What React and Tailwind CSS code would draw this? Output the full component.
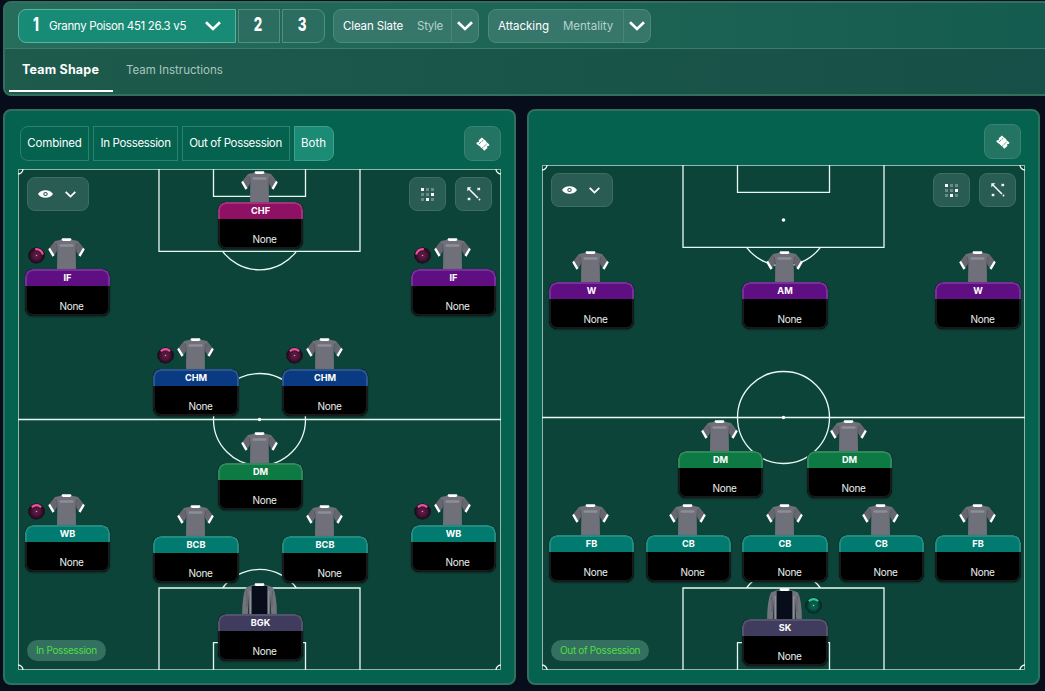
import clsx from "clsx";

const ROLE_COLORS = {
  CHF: "bg-[#8f1163] border-[#a03379]",
  IF: "bg-[#5f0f82] border-[#77309a]",
  W: "bg-[#5f0f82] border-[#77309a]",
  AM: "bg-[#5f0f82] border-[#77309a]",
  CHM: "bg-[#093a82] border-[#2d568f]",
  DM: "bg-[#0e7a43] border-[#30885c]",
  WB: "bg-[#017a6f] border-[#258a80]",
  BCB: "bg-[#017a6f] border-[#258a80]",
  CB: "bg-[#017a6f] border-[#258a80]",
  FB: "bg-[#017a6f] border-[#258a80]",
  BGK: "bg-[#403c5d] border-[#56536f]",
  SK: "bg-[#403c5d] border-[#56536f]",
};

// x / y are the top-left corner of the role card on the pitch
const IN_POSSESSION = [
  { role: "CHF", x: 200, y: 33 },
  { role: "IF", x: 7, y: 100, ball: 35 },
  { role: "IF", x: 393, y: 100, ball: -35 },
  { role: "CHM", x: 135, y: 200, ball: 0, wide: true },
  { role: "CHM", x: 264, y: 200, ball: 0, wide: true },
  { role: "DM", x: 200, y: 294 },
  { role: "WB", x: 7, y: 356, ball: 0 },
  { role: "WB", x: 393, y: 356, ball: 0 },
  { role: "BCB", x: 135, y: 367, wide: true },
  { role: "BCB", x: 264, y: 367, wide: true },
  { role: "BGK", x: 200, y: 445, keeper: true },
];

const OUT_OF_POSSESSION = [
  { role: "W", x: 7, y: 117 },
  { role: "AM", x: 200, y: 117, wide: true },
  { role: "W", x: 393, y: 117, wide: true },
  { role: "DM", x: 136, y: 286 },
  { role: "DM", x: 265, y: 286 },
  { role: "FB", x: 7, y: 370 },
  { role: "CB", x: 104, y: 370 },
  { role: "CB", x: 200, y: 370, wide: true },
  { role: "CB", x: 297, y: 370 },
  { role: "FB", x: 393, y: 370, wide: true },
  { role: "SK", x: 200, y: 454, keeper: true, greenBall: true, wide: true },
];

function Chevron({ className }) {
  return (
    <svg viewBox="0 0 16 10" fill="none" stroke="currentColor" strokeWidth="2.6" className={className}>
      <path d="M1 1.2 8 8 15 1.2" />
    </svg>
  );
}

function EyeIcon() {
  return (
    <svg width="15" height="8" viewBox="0 0 14 8" preserveAspectRatio="none">
      <path
        fillRule="evenodd"
        fill="#fff"
        d="M7 .3C10.2.3 12.8 1.7 14 4 12.8 6.3 10.2 7.7 7 7.7S1.200 6.300 0 4C1.200 1.700 3.800.3 7 .3ZM7 1.900A2.100 2.100 0 1 0 7 6.100 2.100 2.100 0 1 0 7 1.900Z"
      />
      <circle cx="7" cy="4" r="1.1" fill="#fff" />
    </svg>
  );
}

function GridIcon() {
  const bright = [0, 5, 7];
  return (
    <svg width="13" height="13" viewBox="0 0 13 13">
      {Array.from({ length: 9 }).map((_, i) => (
        <rect
          key={i}
          x={(i % 3) * 5}
          y={Math.floor(i / 3) * 5}
          width="3"
          height="3"
          fill="#fff"
          opacity={bright.includes(i) ? 1 : 0.3}
        />
      ))}
    </svg>
  );
}

function ArrowIcon() {
  return (
    <svg width="14" height="14" viewBox="0 0 14 14" stroke="#fff" fill="none">
      <path d="M2 2 11 11" strokeWidth="1.5" />
      <path d="M.3.3h4L.3 4.3Z" fill="#fff" stroke="none" />
      <path d="M10.5.8l2.500 2.400M13 .8l-2.500 2.400M.8 10.800l2.500 2.400M3.300 10.800.8 13.200" strokeWidth="1.1" />
      <circle cx="12.5" cy="12.5" r=".9" fill="#fff" stroke="none" />
    </svg>
  );
}

function TicketIcon() {
  return (
    <svg width="14" height="14" viewBox="0 0 14 14">
      <path
        fill="#fff"
        d="M5.9.4 7.3 1.8 8.2 2.6 9.2 3.2 10.1 4.2 10.8 5.4 12 6.3 13.6 8 12.6 9.1 11.4 8.9 11 10 11.6 10.8 8.4 13.7 7.4 12.7 6.1 11.4 5 10.8 4.4 9.7 3.4 8.9.6 7 .4 6 1.6 4.9 2.6 5.2 3.1 4.3 2.5 3.4Z"
      />
      <path d="M3.2 6.8 8.6 1.9M5.8 11.6 11 6.6" stroke="#237463" strokeWidth=".8" strokeDasharray="2.4 .8" />
    </svg>
  );
}

function Shirt() {
  return (
    <svg width="37" height="32" viewBox="0 0 37 32">
      <path d="M14 1.5 7 3 1.5 10 6 17.5 9.3 12 9 32H28L27.7 12 31 17.5 35.5 10 30 3 23 1.5Z" fill="#6f7079" />
      <path d="M7 3.5 9.3 12 6 17.5 1.8 10.3ZM30 3.5 27.7 12 31 17.5 35.2 10.3Z" fill="#65666f" />
      <path d="M8.3 5.5 9.4 13M28.7 5.5 27.6 13" stroke="#53545d" strokeWidth=".8" />
      <path d="M.2 11.2 2 9.8 6.5 17.2 4.5 18.7ZM36.8 11.2 35 9.8 30.5 17.2 32.5 18.7Z" fill="#fff" />
      <path d="M14.2.3h8.6l.8 1.6-1.8 1.2h-6.6l-1.8-1.2Z" fill="#fff" />
      <rect x="11.5" y="6.2" width="14" height="2.6" rx="1" fill="#8d8e96" />
    </svg>
  );
}

function KeeperShirt() {
  return (
    <svg width="37" height="32" viewBox="0 0 37 32">
      <path d="M11 2.2 5 4.5Q1.2 12 1.1 32H35.9Q35.8 12 32 4.5L26 2.2Z" fill="#72737c" />
      <path d="M6.8 32Q7.5 18 8.2 10L8.2 32ZM30.2 32Q29.5 18 28.8 10L28.8 32Z" fill="#163c38" />
      <path d="M5.5 8Q6.5 14 6 24M31.5 8Q30.5 14 31 24" stroke="#5b5c65" strokeWidth=".9" fill="none" />
      <path d="M9.2 8v24M27.8 8v24" stroke="#c5c8cc" strokeWidth=".7" opacity=".7" />
      <path d="M10.7 3H26.3V32H10.7Z" fill="#080d1b" />
      <path d="M14.2.3h8.6l.8 1.6-1.6 1h-7l-1.6-1Z" fill="#fff" />
    </svg>
  );
}

/* Duty dial beside the shirt, the lit arc is turned by `angle` */
function Ball({ angle = 0, green }) {
  const lit = green ? "#2fc795" : "#e9559c";
  return (
    <svg width="17" height="17" viewBox="0 0 17 17">
      <defs>
        <radialGradient id="ballPink">
          <stop offset="0" stopColor="#7a2356" />
          <stop offset=".5" stopColor="#4c1538" />
          <stop offset="1" stopColor="#160816" />
        </radialGradient>
        <radialGradient id="ballGreen">
          <stop offset="0" stopColor="#107d68" />
          <stop offset=".5" stopColor="#075546" />
          <stop offset="1" stopColor="#03211e" />
        </radialGradient>
      </defs>
      <path
        d="M8.5.2 11 1.1 13.6 1.9 15.2 4.1 16.7 6.2V8.7L16.5 11.2 14.8 13.3 13 15.3 10.6 16 8.5 16.8 6 16.1 3.6 15.2 2.1 13.1.5 11.2.4 8.7.3 6.2 1.8 4 3.4 1.9 6 1.1Z"
        fill={green ? "url(#ballGreen)" : "url(#ballPink)"}
      />
      <path d="M8.5 4.5v8M4.5 8.5h8M5.5 5.5l6 6M11.5 5.5l-6 6" stroke={green ? "#054239" : "#3a112e"} strokeWidth=".5" />
      <circle cx="8.5" cy="8.5" r=".8" fill={green ? "#8ae8cb" : "#f08abb"} />
      <path d="M3.8 4.1Q8.5.2 13.2 4.1" transform={`rotate(${angle} 8.5 8.5)`} stroke={lit} strokeWidth="2.1" fill="none" />
    </svg>
  );
}

function Player({ role, x, y, ball, keeper, greenBall, wide }) {
  return (
    <div className={clsx("absolute", wide ? "w-[86px]" : "w-[85px]")} style={{ left: x, top: y }}>
      <div className={clsx("absolute -top-[31px]", wide ? "left-[23.5px]" : "left-[23px]")}>
        {keeper ? <KeeperShirt /> : <Shirt />}
      </div>
      {ball !== undefined && (
        <div className={clsx("absolute -top-[22px]", wide ? "left-[3.5px]" : "left-[3px]")}>
          <Ball angle={ball} />
        </div>
      )}
      {greenBall && (
        <div className="absolute left-[63px] -top-[22px]">
          <Ball green />
        </div>
      )}
      <div className="relative h-[47px] overflow-hidden rounded-lg bg-black shadow-[0_1px_2px_rgba(0,0,0,0.4)]">
        <div
          className={clsx(
            "flex h-[17px] items-center justify-center rounded-t-lg border-2 border-b-0 pb-[2px] text-[9.2px] font-bold leading-none text-white",
            ROLE_COLORS[role]
          )}
        >
          {role}
        </div>
        <div
          className={clsx(
            "flex h-[30px] items-center justify-center rounded-b-lg border-2 border-t-0 border-[#171a1b] pt-[11px] text-[10px] leading-none tracking-[-0.3px] text-[#eceeee]",
            wide ? "pl-[9px]" : "pl-2"
          )}
        >
          None
        </div>
      </div>
    </div>
  );
}

function PitchLines({ height }) {
  const h = height;
  return (
    <svg width="483" height={h} viewBox={`0 0 483 ${h}`} fill="none" stroke="#e8fbf3" strokeWidth="1.3" className="absolute inset-0">
      <rect x=".5" y=".5" width="482" height={h - 1} stroke="#93b8ab" strokeWidth="1" />
      <path d={`M0 ${h / 2}H483`} />
      <circle cx="241.5" cy={h / 2} r="46" />
      <circle cx="241.5" cy={h / 2} r="1.7" fill="#fff" stroke="none" />
      <circle cx="241.5" cy="55" r="1.8" fill="#fff" stroke="none" />
      <path d="M141 0V82.3H342V0M195.5 0V27.3H287.5V0M204.6 82.3A46 46 0 0 0 278.4 82.3" />
      <path d={`M141 ${h}V${h - 82}H342V${h}M195.5 ${h}V${h - 27.3}H287.5V${h}M204.6 ${h - 82}A46 46 0 0 1 278.4 ${h - 82}`} />
      <path d={`M5 0A5 5 0 0 1 0 5M478 0A5 5 0 0 0 483 5M0 ${h - 5}A5 5 0 0 1 5 ${h}M483 ${h - 5}A5 5 0 0 0 478 ${h}`} />
    </svg>
  );
}

function Pitch({ label, players, height, className }) {
  return (
    <div className={clsx("relative w-[483px] bg-[#0d443a]", className)}>
      <PitchLines height={height} />
      {players.map((p, i) => (
        <Player key={i} {...p} />
      ))}
      <div className="relative flex items-center px-[9px] pt-2">
        <div className="flex h-[34px] w-[62px] items-center justify-center gap-3 rounded-lg border border-[#3d6e62] bg-[#295c52] pr-[2px]">
          <EyeIcon />
          <Chevron className="h-[7px] w-[11px] text-white" />
        </div>
        <div className="ml-auto flex gap-[9px]">
          <div className="flex h-[34px] w-[37px] items-center justify-center rounded-lg border border-[#3d6e62] bg-[#295c52]">
            <GridIcon />
          </div>
          <div className="flex h-[34px] w-[37px] items-center justify-center rounded-lg border border-[#3d6e62] bg-[#295c52]">
            <ArrowIcon />
          </div>
        </div>
      </div>
      <div className="absolute bottom-[9px] left-[9px] flex h-[21px] items-center rounded-full bg-[#34705f] px-[9px] pb-[2px] text-[10px] leading-none tracking-[-0.33px] text-[#52dc45]">
        {label}
      </div>
    </div>
  );
}

function TicketButton() {
  return (
    <div className="flex h-[35px] w-[37px] items-center justify-center rounded-lg border border-[#398372] bg-[#237463]">
      <TicketIcon />
    </div>
  );
}

function SelectPill({ value, label, className, valueClass, labelClass }) {
  return (
    <div className={clsx("flex h-[34px] items-center rounded-lg border border-[#4a8b7c] bg-[#37776b] pl-[9px]", className)}>
      <span className={clsx("pt-[2px] text-white", valueClass)}>{value}</span>
      <span className={clsx("ml-[14px] pt-[2px] text-[#b6d3cb]", labelClass)}>{label}</span>
      <div className="ml-auto flex h-full w-[27px] items-center justify-center border-l border-[#498678]">
        <Chevron className="h-[10px] w-4 text-white" />
      </div>
    </div>
  );
}

export default function App() {
  return (
    <div className="h-[691px] w-[1045px] overflow-hidden bg-[#080d1b] pl-[3px] pt-px font-['Inter',sans-serif] text-[11.5px] leading-none text-white">
      {/* Header */}
      <header className="h-[95px] w-[1060px] overflow-hidden rounded-lg border-2 border-[#31705f] bg-[#19564a]">
        <div className="flex h-[46px] items-center border-b border-[#3b7c6d] bg-gradient-to-r from-[#276d5c] to-[#145c4f] pl-[13px]">
          <div className="flex h-[34px] w-[218px] items-center rounded-l-lg border border-[#5db3a0] bg-[#188b76] pl-[10px]">
            <span className="w-[14px] scale-x-[0.72] pb-[3px] text-center text-[18.5px] font-extrabold">1</span>
            <span className="ml-[6px] whitespace-nowrap pt-[2px] tracking-[-0.33px]">Granny Poison 451 26.3 v5</span>
            <Chevron className="ml-auto mr-[14px] h-[10px] w-4" />
          </div>
          <div className="ml-[2px] flex h-[34px] w-[42px] items-center justify-center border border-[#4f9181] bg-[#2b6d60] pb-[3px] pr-[2px] text-[18.5px] font-extrabold">
            <span className="scale-x-[0.72]">2</span>
          </div>
          <div className="ml-[2px] flex h-[34px] w-[43px] items-center justify-center rounded-r-lg border border-[#4f9181] bg-[#2b6d60] pb-[3px] pr-[2px] text-[18.5px] font-extrabold">
            <span className="scale-x-[0.72]">3</span>
          </div>
          <SelectPill value="Clean Slate" label="Style" className="ml-2 w-[146px]" valueClass="tracking-[-0.13px]" labelClass="tracking-[-0.28px]" />
          <SelectPill value="Attacking" label="Mentality" className="ml-[9px] w-[163px]" />
        </div>
        <nav className="flex h-[45px] bg-gradient-to-r from-[#1e5b4c] to-[#164f47] pl-1">
          <div className="flex h-[43px] w-[104px] items-center justify-center border-b-2 border-white pr-px pt-px text-[12.5px] font-bold tracking-[0.2px]">
            Team Shape
          </div>
          <div className="flex h-[43px] items-center pl-[13px] text-[#a8c6be]">Team Instructions</div>
        </nav>
      </header>

      {/* Pitches */}
      <main className="mt-[13px] flex gap-[11px]">
        <section className="h-[576px] w-[513px] rounded-lg border-2 border-[#31705f] bg-[#04624f] pl-[13px] pt-[15px]">
          <div className="flex w-[483px] pl-[2px]">
            <div className="flex h-[35px] w-[69px] items-center justify-center rounded-l-lg border border-[#2f806d] tracking-[-0.15px]">Combined</div>
            <div className="ml-1 flex h-[35px] w-[85px] items-center justify-center border border-[#2f806d] tracking-[-0.35px]">In Possession</div>
            <div className="ml-1 flex h-[35px] w-[108px] items-center justify-center border border-[#2f806d] pr-px tracking-[-0.35px]">Out of Possession</div>
            <div className="ml-1 flex h-[35px] w-10 items-center justify-center rounded-r-lg border border-[#3fa18b] bg-[#1b8b75] pr-px">Both</div>
            <div className="ml-auto">
              <TicketButton />
            </div>
          </div>
          <Pitch label="In Possession" players={IN_POSSESSION} height={501} className="mt-2 h-[501px]" />
        </section>

        <section className="h-[576px] w-[513px] rounded-lg border-2 border-[#31705f] bg-[#04624f] pl-[13px] pt-[13px]">
          <div className="flex w-[479px] justify-end">
            <TicketButton />
          </div>
          <Pitch label="Out of Possession" players={OUT_OF_POSSESSION} height={505} className="mt-[6px] h-[505px]" />
        </section>
      </main>
    </div>
  );
}
